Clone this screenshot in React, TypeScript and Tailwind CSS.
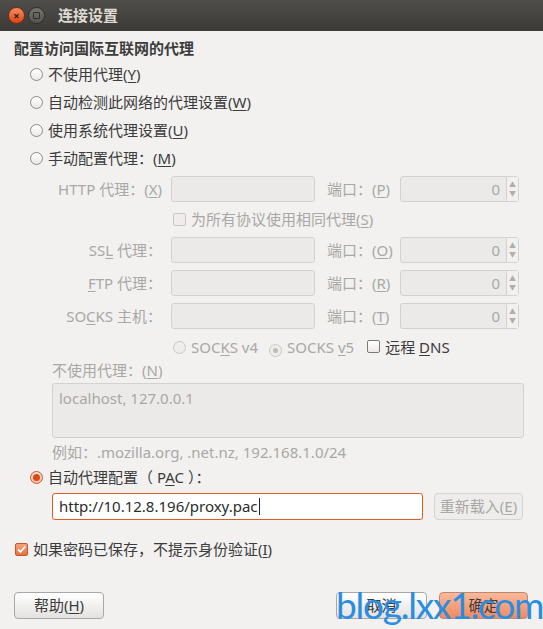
import React from "react";

const font = "font-['Noto_Sans','Noto_Sans_CJK_SC',sans-serif]";

type RadioProps = { checked?: boolean; disabled?: boolean };

const Radio = ({ checked, disabled }: RadioProps) => (
  <span
    className={`inline-flex h-[13px] w-[13px] shrink-0 items-center justify-center rounded-full border ${
      checked
        ? "border-[#c9562a] bg-gradient-to-b from-[#fbe2d6] to-[#f3c2ab]"
        : disabled
        ? "border-[#c8c7c4] bg-[#eeedeb]"
        : "border-[#8c8b88] bg-gradient-to-b from-white to-[#e9e8e6]"
    }`}
  >
    {checked && <span className="h-[7px] w-[7px] rounded-full bg-[#dd4814]" />}
  </span>
);

const DisabledRadioDot = () => (
  <span className="inline-flex h-[13px] w-[13px] shrink-0 items-center justify-center rounded-full border border-[#c8c7c4] bg-[#eeedeb]">
    <span className="h-[5px] w-[5px] rounded-full bg-[#bdbcb9]" />
  </span>
);

const Check = ({ disabled }: { disabled?: boolean }) => (
  <span
    className={`inline-block h-[13px] w-[13px] shrink-0 rounded-[2px] border ${
      disabled ? "border-[#c8c7c4] bg-[#eeedeb]" : "border-[#7c7b78] bg-gradient-to-b from-white to-[#ebeae8]"
    }`}
  />
);

const Mn = ({ pre, k, post, cls }: { pre: string; k: string; post?: string; cls?: string }) => (
  <span className={cls}>
    {pre}
    <u className="underline-offset-2">{k}</u>
    {post}
  </span>
);

const dis = "text-[#a9a8a5]";

const ProxyRow = ({ label, port }: { label: React.ReactNode; port: string }) => (
  <div className="flex h-[26px] items-center">
    <div className={`w-[110px] pl-[52px] box-content -ml-[52px] text-right ${dis}`}>{label}</div>
    <div className="ml-[9px] h-[26px] w-[144px] rounded-[3px] border border-[#d3d2cf] bg-[#ebeae8]" />
    <div className={`ml-[12px] w-[73px] ${dis}`}>
      端口：(<u className="underline-offset-2">{port}</u>)
    </div>
    <div className="flex h-[26px] w-[119px] rounded-[3px] border border-[#d3d2cf] bg-[#ebeae8]">
      <div className={`flex flex-1 items-center justify-end pr-[6px] ${dis}`}>0</div>
      <div className="flex w-[12px] flex-col items-center justify-center border-l border-[#d3d2cf] bg-[#f2f1f0] text-[7px] leading-[9px] text-[#b0afac]">
        <span>▲</span>
        <span>▼</span>
      </div>
    </div>
  </div>
);

export default function App() {
  return (
    <div className={`relative h-[629px] w-[543px] overflow-hidden bg-[#f2f1f0] text-[15px] text-[#3c3c3c] ${font}`}>
      {/* title bar */}
      <div className="flex h-[31px] items-center bg-gradient-to-b from-[#4f4e4a] to-[#3b3a36] pl-[8px]">
        <span className="flex h-[17px] w-[17px] items-center justify-center rounded-full border border-[#7a2a10] bg-gradient-to-b from-[#f58a5e] to-[#d9460f] text-[11px] font-bold leading-none text-[#3a1a0c]">
          ×
        </span>
        <span className="ml-[3px] flex h-[17px] w-[17px] items-center justify-center rounded-full border border-[#2e2d2a] bg-gradient-to-b from-[#75746f] to-[#55544f]">
          <span className="h-[7px] w-[7px] rounded-[1px] border border-[#2e2d2a]" />
        </span>
        <span className="ml-[13px] text-[15px] font-bold text-[#dfdbd2]">连接设置</span>
      </div>

      <div className="px-[14px]">
        <div className="mt-[7px] flex h-[20px] items-center font-bold">配置访问国际互联网的代理</div>

        <div className="mt-[2px] pl-[16px]">
          {[
            ["不使用代理(", "Y", ")"],
            ["自动检测此网络的代理设置(", "W", ")"],
            ["使用系统代理设置(", "U", ")"],
            ["手动配置代理：(", "M", ")"],
          ].map(([a, b, c]) => (
            <div key={b} className="flex h-[28px] items-center gap-[5px]">
              <Radio />
              <Mn pre={a} k={b} post={c} />
            </div>
          ))}
        </div>

        <div className="pl-[38px]">
          <div className="mt-[4px]">
            <ProxyRow label={<Mn pre="HTTP 代理：(" k="X" post=")" />} port="P" />
          </div>
          <div className="mt-[4px] flex h-[26px] items-center gap-[5px] pl-[121px]">
            <Check disabled />
            <Mn pre="为所有协议使用相同代理(" k="S" post=")" cls={dis} />
          </div>
          <div className="mt-[5px] flex flex-col gap-[7px]">
            <ProxyRow label={<Mn pre="SS" k="L" post=" 代理：" />} port="O" />
            <ProxyRow label={<Mn pre="" k="F" post="TP 代理：" />} port="R" />
            <ProxyRow label={<Mn pre="SO" k="C" post="KS 主机：" />} port="T" />
          </div>
          <div className="mt-[6px] flex h-[24px] items-center pl-[121px]">
            <Radio disabled />
            <Mn pre="SOC" k="K" post="S v4" cls={`ml-[5px] ${dis}`} />
            <span className="ml-[11px]">
              <DisabledRadioDot />
            </span>
            <Mn pre="SOCKS " k="v" post="5" cls={`ml-[5px] ${dis}`} />
            <span className="ml-[13px]">
              <Check />
            </span>
            <Mn pre="远程 " k="D" post="NS" cls="ml-[5px]" />
          </div>
          <div className={`mt-[2px] flex h-[18px] items-center ${dis}`}>
            <Mn pre="不使用代理：(" k="N" post=")" />
          </div>
          <div className={`mt-[4px] h-[55px] w-[472px] rounded-[3px] border border-[#d3d2cf] bg-[#ebeae8] px-[6px] pt-[3px] ${dis}`}>
            localhost, 127.0.0.1
          </div>
          <div className={`mt-[4px] flex h-[20px] items-center ${dis}`}>
            例如：.mozilla.org, .net.nz, 192.168.1.0/24
          </div>
        </div>

        <div className="mt-[5px] flex h-[20px] items-center gap-[5px] pl-[16px]">
          <Radio checked />
          <Mn pre="自动代理配置（ P" k="A" post="C ）：" />
        </div>
        <div className="mt-[6px] flex items-center pl-[38px]">
          <div className="flex h-[27px] w-[371px] items-center rounded-[3px] border border-[#e05a25] bg-white px-[6px] text-[#2c2c2c]">
            http://10.12.8.196/proxy.pac
            <span className="ml-px h-[17px] w-px bg-[#222]" />
          </div>
          <div className={`ml-[11px] flex h-[27px] w-[89px] items-center justify-center rounded-[4px] border border-[#d5d4d1] bg-[#eeedeb] ${dis}`}>
            <Mn pre="重新载入(" k="E" post=")" />
          </div>
        </div>

        <div className="mt-[19px] flex h-[20px] items-center gap-[5px] pl-[1px]">
          <span className="flex h-[13px] w-[13px] items-center justify-center rounded-[2px] border border-[#c9562a] bg-gradient-to-b from-[#f7a07a] to-[#e5743f]">
            <svg width="11" height="11" viewBox="0 0 11 11">
              <path d="M2 5.5 L4.5 8 L9 2.5" fill="none" stroke="#fff" strokeWidth="1.8" />
            </svg>
          </span>
          <Mn pre="如果密码已保存，不提示身份验证(" k="I" post=")" />
        </div>

        <div className="mt-[33px] flex items-center">
          <button className="flex h-[27px] w-[90px] items-center justify-center rounded-[4px] border border-[#a9a8a5] bg-gradient-to-b from-white to-[#e3e2e0]">
            <Mn pre="帮助(" k="H" post=")" />
          </button>
          <div className="flex-1" />
          <button className="flex h-[27px] w-[91px] items-center justify-center rounded-[4px] border border-[#a9a8a5] bg-gradient-to-b from-white to-[#e3e2e0]">
            取消
          </button>
          <button className="ml-[12px] mr-[1px] flex h-[27px] w-[89px] items-center justify-center rounded-[4px] border border-[#c0876c] bg-gradient-to-b from-[#f9b89b] to-[#ee8a60]">
            确定
          </button>
        </div>
      </div>

      <div className="pointer-events-none absolute left-[336px] top-[583px] font-['Lato',sans-serif] text-[37px] leading-[44px] tracking-[-1.2px] text-[#2a8de0]">
        blog.lxx1.com
      </div>
    </div>
  );
}
